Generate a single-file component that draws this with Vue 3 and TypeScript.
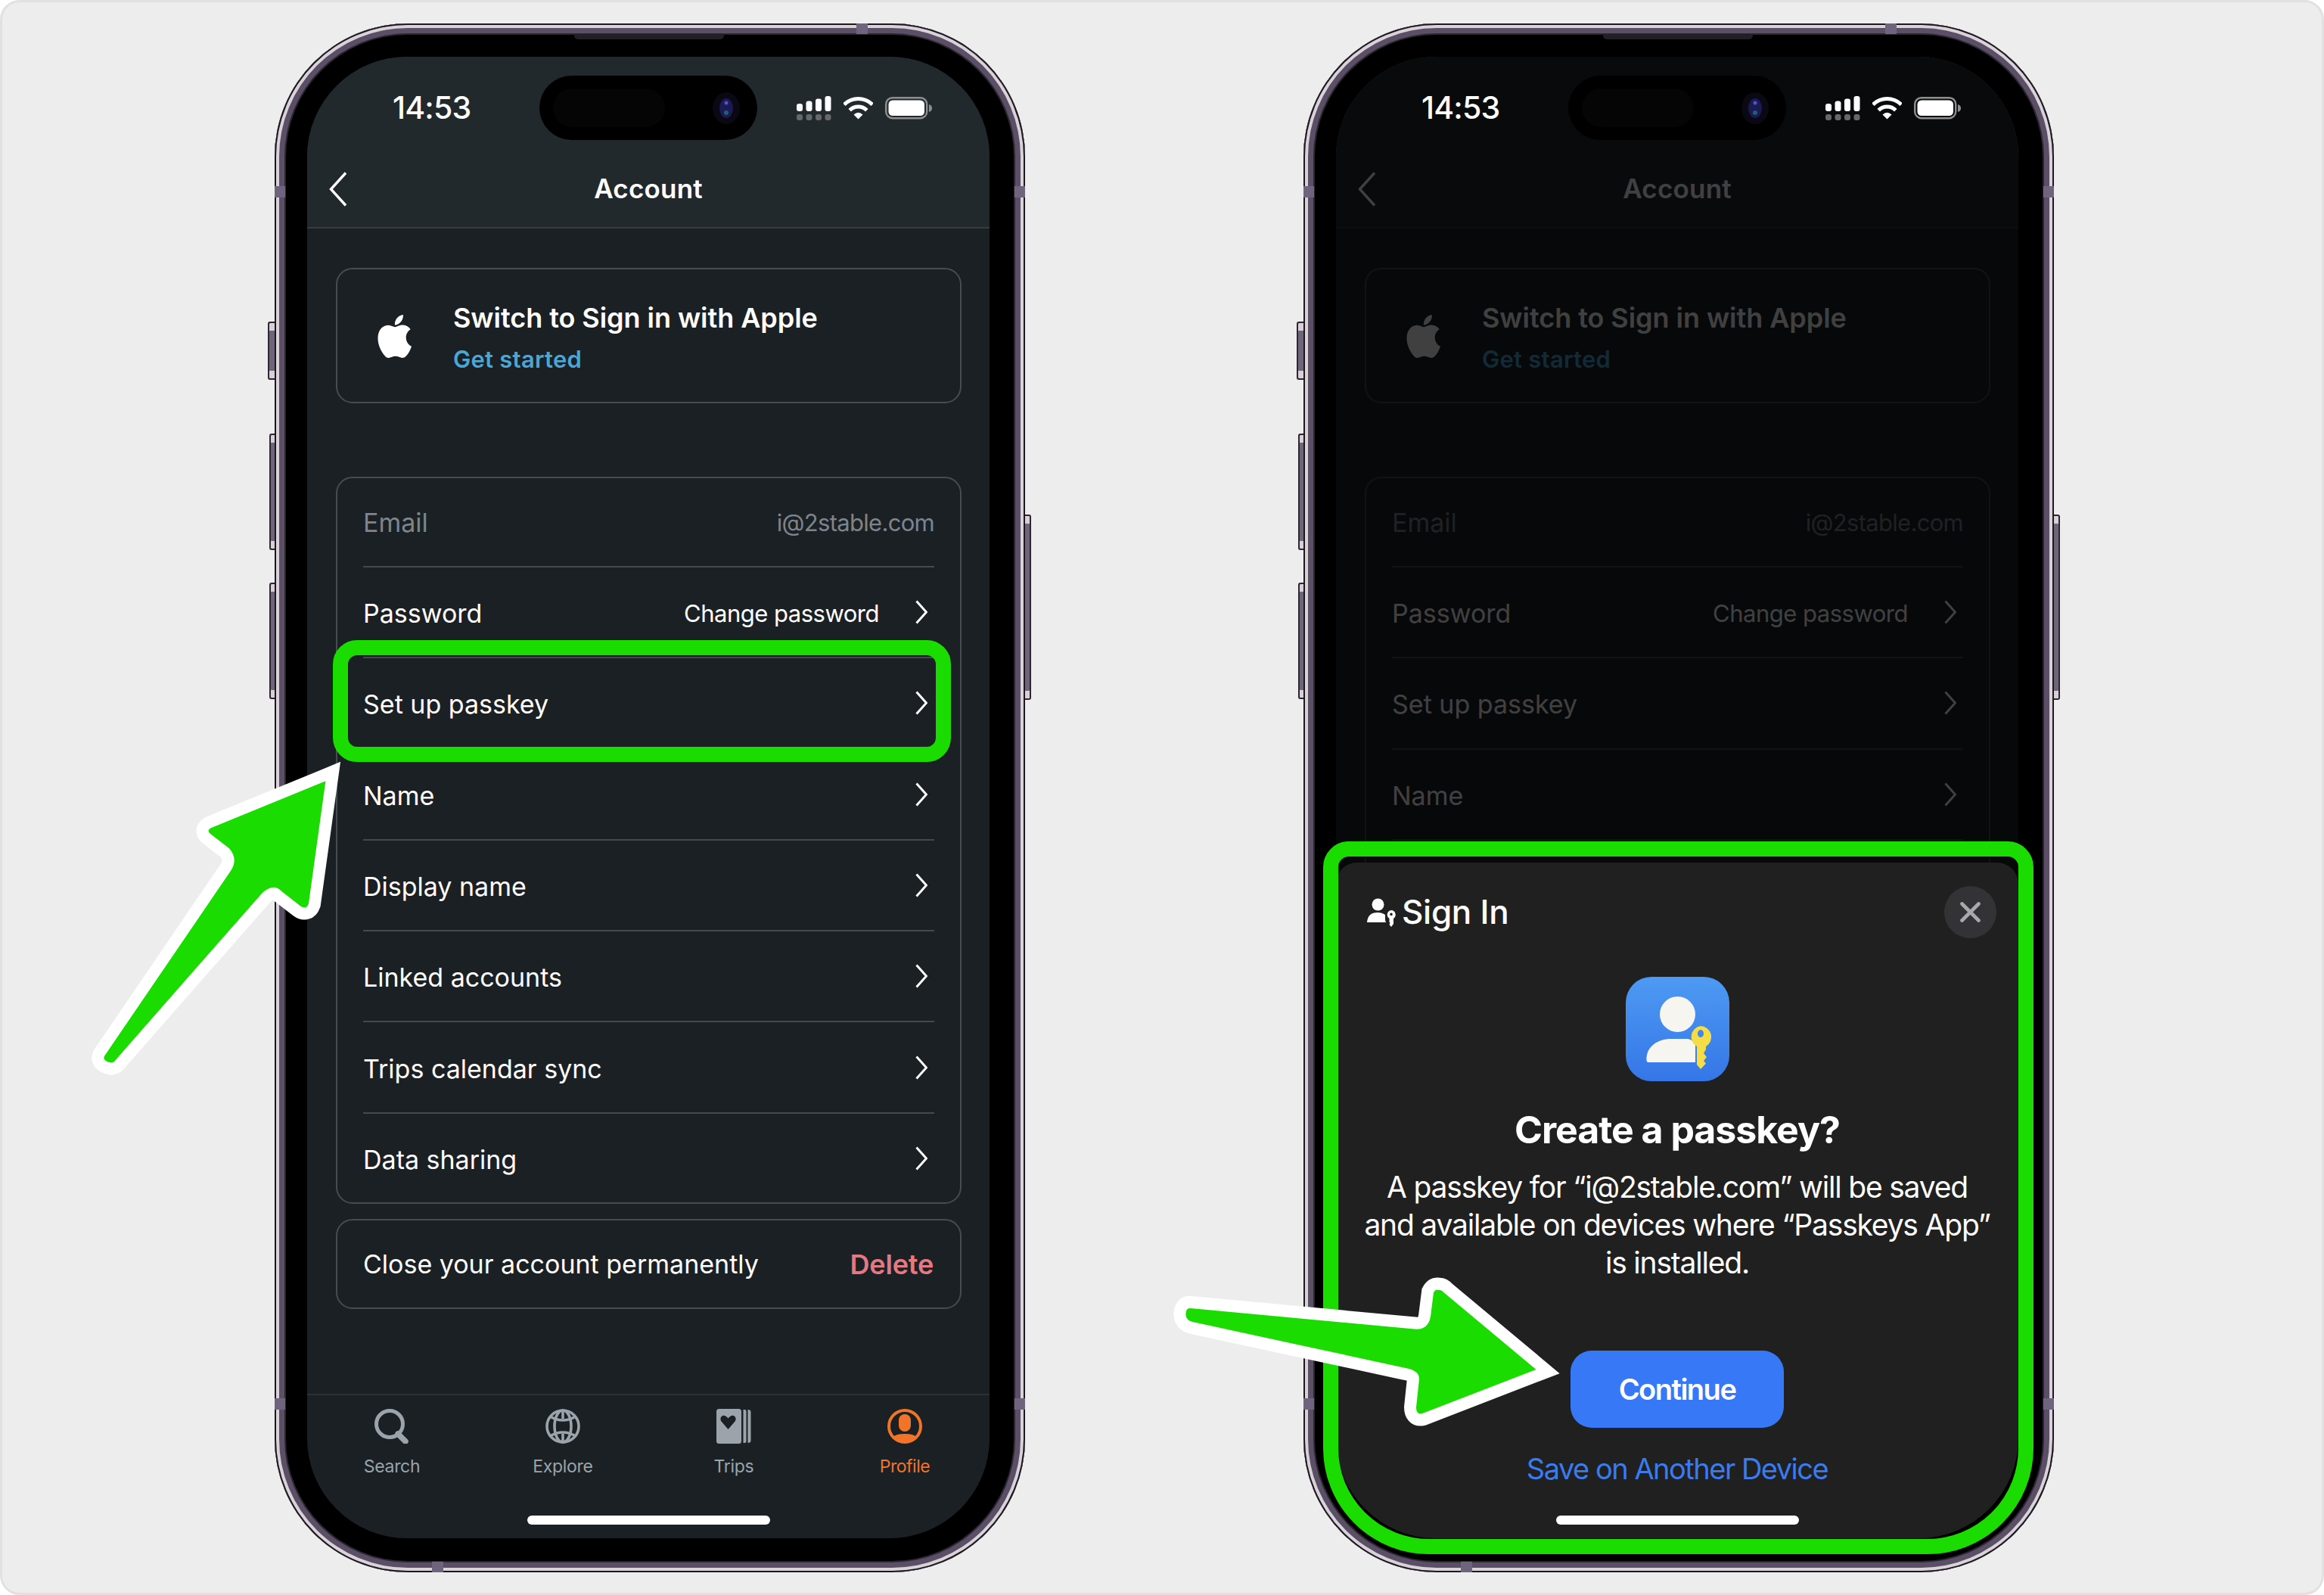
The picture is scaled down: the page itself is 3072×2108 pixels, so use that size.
<script setup lang="ts">
interface Row { label: string; value?: string; muted?: boolean; chevron: boolean }
const rows: Row[] = [
  { label: 'Email', value: 'i@2stable.com', muted: true, chevron: false },
  { label: 'Password', value: 'Change password', chevron: true },
  { label: 'Set up passkey', chevron: true },
  { label: 'Name', chevron: true },
  { label: 'Display name', chevron: true },
  { label: 'Linked accounts', chevron: true },
  { label: 'Trips calendar sync', chevron: true },
  { label: 'Data sharing', chevron: true },
]
const phones = [false, true]
// The sheet covers everything below the "Name" row on the second phone.
const rowsFor = (dim: boolean): Row[] => (dim ? rows.slice(0, 4) : rows)
</script>

<template>
  <div class="page">
    <div v-for="dim in phones" :key="String(dim)" class="phone">
      <i class="band band-top"></i>
      <i class="band band-bottom"></i>
      <i class="band band-l1"></i>
      <i class="band band-r1"></i>
      <i class="band band-l2"></i>
      <i class="band band-r2"></i>
      <i class="btn btn-action"></i>
      <i class="btn btn-up"></i>
      <i class="btn btn-down"></i>
      <i class="btn btn-power"></i>
      <i class="speaker"></i>

      <div class="screen">
        <header class="head">
          <div class="status">
            <div class="time">14:53</div>
            <div class="island">
              <i class="island-pill"></i>
              <svg class="cam" width="36" height="44" viewBox="0 0 36 44">
                <ellipse cx="18" cy="22" rx="18" ry="21" fill="#0a0812" />
                <ellipse cx="18" cy="22" rx="9" ry="13" fill="#1b1a55" />
                <circle cx="18" cy="15" r="2.5" fill="#4d53c8" />
                <circle cx="18" cy="28" r="3" fill="#1f5f6a" />
              </svg>
            </div>
            <div class="sys">
              <svg width="46" height="32" viewBox="0 0 46 32">
                <rect x="0" y="10" width="8" height="10" rx="3" fill="#fff" />
                <rect x="12.5" y="6.5" width="8" height="13.5" rx="3" fill="#fff" />
                <rect x="25" y="3.5" width="8" height="16.5" rx="3" fill="#fff" />
                <rect x="37.5" y="0" width="8" height="20" rx="3" fill="#fff" />
                <rect x="0" y="24" width="8" height="8" rx="3" fill="#666869" />
                <rect x="12.5" y="24" width="8" height="8" rx="3" fill="#666869" />
                <rect x="25" y="24" width="8" height="8" rx="3" fill="#666869" />
                <rect x="37.5" y="24" width="8" height="8" rx="3" fill="#666869" />
              </svg>
              <svg width="39" height="30" viewBox="0 0 39 30" fill="none" stroke="#fff" stroke-width="5">
                <path d="M.8 10.3A26.5 26.5 0 0 1 38.2 10.3" />
                <path d="M8.2 17.7A16 16 0 0 1 30.8 17.7" />
                <path d="M19.5 29.5L13.5 23.5Q19.5 18 25.5 23.5Z" fill="#fff" stroke="none" />
              </svg>
              <svg width="63" height="30" viewBox="0 0 63 30">
                <rect x="1.2" y="1.2" width="54" height="27" rx="8.5" fill="none" stroke="#8e8f90" stroke-width="2.4" />
                <rect x="4.5" y="4.5" width="47.5" height="20.5" rx="5.5" fill="#fff" />
                <path d="M58 10q4 1 4 5t-4 5z" fill="#8e8f90" />
              </svg>
            </div>
          </div>
          <div class="nav">
            <svg class="back" width="24" height="46" viewBox="0 0 24 46" fill="none" stroke="#fff" stroke-width="3.4">
              <path d="M22 1.5L2.5 23L22 44.5" />
            </svg>
            <div class="nav-title">Account</div>
          </div>
        </header>

        <main class="body">
          <section class="card apple">
            <svg class="apple-logo" width="47" height="57" viewBox="3.9 3 16 18" preserveAspectRatio="none">
              <path fill="#fff" d="M17.05 20.28c-.98.95-2.05.8-3.08.35-1.09-.46-2.09-.48-3.24 0-1.44.62-2.2.44-3.06-.35C2.79 15.25 3.51 7.59 9.05 7.31c1.35.07 2.29.74 3.08.8 1.18-.24 2.31-.93 3.57-.84 1.51.12 2.65.72 3.4 1.8-3.12 1.87-2.38 5.98.48 7.13-.57 1.5-1.31 2.99-2.54 4.09zM12.03 7.25c-.15-2.23 1.66-4.07 3.74-4.25.29 2.58-2.34 4.5-3.74 4.25z" />
            </svg>
            <div>
              <div class="apple-title">Switch to Sign in with Apple</div>
              <div class="apple-link">Get started</div>
            </div>
          </section>

          <section class="card group">
            <div v-for="row in rowsFor(dim)" :key="row.label" class="row">
              <span :class="['row-label', { muted: row.muted }]">{{ row.label }}</span>
              <span v-if="row.value" :class="['row-value', { muted: row.muted }]">{{ row.value }}</span>
              <svg v-if="row.chevron" class="chev" width="16" height="32" viewBox="0 0 16 32" fill="none" stroke="#fff" stroke-width="3">
                <path d="M1.5 1.5L14.5 16L1.5 30.5" />
              </svg>
            </div>
          </section>

          <section v-if="!dim" class="card close-card">
            <span class="row-label">Close your account permanently</span>
            <span class="delete">Delete</span>
          </section>
        </main>

        <footer v-if="!dim" class="tabs">
          <div class="tab">
            <svg width="46" height="46" viewBox="0 0 46 46" fill="none" stroke="#9aa4aa">
              <circle cx="20" cy="20" r="17.5" stroke-width="5" />
              <path d="M31 33L41 43" stroke-width="7.5" stroke-linecap="round" />
            </svg>
            <span>Search</span>
          </div>
          <div class="tab">
            <svg width="46" height="46" viewBox="0 0 46 46" fill="none" stroke="#9aa4aa" stroke-width="3.6">
              <circle cx="23" cy="23" r="21" />
              <ellipse cx="23" cy="23" rx="11" ry="21" />
              <path d="M23 2V13M23 33V44M6 10Q23 20 40 10M6 36Q23 26 40 36" />
            </svg>
            <span>Explore</span>
          </div>
          <div class="tab">
            <svg width="46" height="46" viewBox="0 0 46 46">
              <rect x="0" y="0" width="33" height="46" rx="3.5" fill="#9aa4aa" />
              <path d="M35.5 1h2a2 2 0 0 1 2 2v40a2 2 0 0 1-2 2h-2zM41.5 1q4 0 4 3v38q0 3-4 3z" fill="#9aa4aa" />
              <path d="M15.5 27L6 16Q4.5 13 6 11Q8 8 11 9Q14 10 15.5 12.5Q17 10 20 9Q23 8 25 11Q26.5 13 25 16Z" fill="#1b2024" />
            </svg>
            <span>Trips</span>
          </div>
          <div class="tab tab-on">
            <svg width="46" height="46" viewBox="0 0 46 46">
              <circle cx="23" cy="23" r="21" fill="none" stroke="#f27429" stroke-width="4" />
              <rect x="15" y="7" width="16" height="23" rx="8" fill="#f27429" />
              <path d="M7 38Q10 33 23 33Q36 33 39 38Q33 45 23 45Q13 45 7 38Z" fill="#f27429" />
            </svg>
            <span>Profile</span>
          </div>
        </footer>
        <div class="home"></div>

        <div v-if="dim" class="scrim"></div>

        <aside v-if="dim" class="sheet">
          <div class="sheet-top">
            <div class="sheet-brand">
              <svg width="38" height="38" viewBox="0 0 38 38" fill="#fff">
                <circle cx="14.5" cy="8.5" r="8" />
                <path d="M0 32Q1 19 14 19Q20 19 24 22V28Q24 30 25 32Z" />
                <path fill-rule="evenodd" d="M32 16a6 6 0 0 1 3 11v7l-3 4l-2.500-3l1-2l-1-1.500v-4.500a6 6 0 0 1 2.500-11zM32 19.500a1.800 1.800 0 1 0 .01 0z" />
              </svg>
              <span>Sign In</span>
            </div>
            <div class="close">
              <svg width="27" height="27" viewBox="0 0 27 27" stroke="#a9a9ad" stroke-width="4.600" stroke-linecap="round">
                <path d="M2.500 2.500L24.500 24.500M24.500 2.500L2.500 24.500" />
              </svg>
            </div>
          </div>
          <div class="app-icon">
            <svg width="137" height="138" viewBox="0 0 137 138">
              <ellipse cx="68.500" cy="49.500" rx="23.500" ry="23.500" fill="#f6f5ef" />
              <path d="M29 113Q27 112 27.500 106C29 92 42 82 60 82H82Q88 83 92 89V113Z" fill="#f6f5ef" />
              <path fill="#f5dd45" fill-rule="evenodd" d="M99 65a14.500 14.500 0 0 1 7 27v4l-3 5l4 5l-4 5l3 3.500l-7 7.500l-5-6v-24a14.500 14.500 0 0 1 5-27zM99 70a4 5 0 1 0 .01 0z" />
            </svg>
          </div>
          <h2 class="sheet-title">Create a passkey?</h2>
          <p class="sheet-text">A passkey for “i@2stable.com” will be saved<br />and available on devices where “Passkeys App”<br />is installed.</p>
          <div class="continue">Continue</div>
          <div class="another">Save on Another Device</div>
          <div class="home sheet-home"></div>
        </aside>
      </div>
    </div>

    <div class="mark mark-row"></div>
    <div class="mark mark-sheet"></div>
    <svg class="arrows" width="3072" height="2108" viewBox="0 0 3072 2108">
      <path class="arrow" d="M430.400 1032.200L280.800 1093.500Q272 1097 278 1102L303 1121.300Q315 1135 305.400 1150.300L138 1395.800Q135 1402 146.900 1404.500Q151 1404 153.600 1399.900L345.500 1181.400Q361 1166 372.300 1178.100L396.900 1197.200Q405 1203 408 1193.900Z" />
      <path class="arrow" d="M2030.500 1810L1879.700 1868.300Q1872 1870 1872 1860L1875.900 1823.300Q1877 1811 1856.700 1807.700L1577.400 1747.300Q1567 1745 1567.400 1736Q1568 1728 1573.600 1729L1872 1756.700Q1888 1757 1891 1740L1895 1708.300Q1898 1703 1900.400 1705Q1905 1704 1908 1707.700Z" />
    </svg>
  </div>
</template>

<style scoped>
.page {
  position: relative;
  width: 3072px;
  height: 2108px;
  box-sizing: border-box;
  padding: 28px 0 0 360px;
  display: flex;
  gap: 368px;
  align-items: flex-start;
  background: #ededed;
  border: 3px solid #e1e1e1;
  border-radius: 26px;
  font-family: Inter, "Noto Sans", sans-serif;
  color: #fff;
  overflow: hidden;
}
.phone {
  position: relative;
  flex: none;
  width: 992px;
  height: 2047px;
  box-sizing: border-box;
  padding: 44px 47px 45px 43px;
  border-radius: 176px;
  background: #000;
  box-shadow:
    inset 0 0 0 2px #1c1722,
    inset 0 0 0 6px #d9d2d6,
    inset 0 0 0 13px #5a4f66,
    inset 0 0 0 15px #2b2630;
}
.band { position: absolute; background: #6f647d; }
.band-top { left: 769px; top: 0; width: 15px; height: 14px; }
.band-bottom { left: 208px; bottom: 0; width: 15px; height: 14px; }
.band-l1, .band-l2 { left: 0; width: 14px; height: 15px; }
.band-r1, .band-r2 { right: 0; width: 14px; height: 15px; }
.band-l1, .band-r1 { top: 215px; }
.band-l2, .band-r2 { top: 1817px; }
.btn {
  position: absolute;
  box-sizing: border-box;
  background: #6f6578;
  border: 2px solid #2b2630;
  border-right: 0;
  box-shadow: inset 0 10px 0 #d8d0d6, inset 0 -10px 0 #d8d0d6;
}
.btn-action { left: -9px; top: 394px; width: 9px; height: 77px; border-radius: 3px 0 0 3px; }
.btn-up { left: -7px; top: 542px; width: 7px; height: 154px; border-radius: 3px 0 0 3px; }
.btn-down { left: -7px; top: 739px; width: 7px; height: 154px; border-radius: 3px 0 0 3px; }
.btn-power {
  right: -8px;
  top: 649px;
  width: 8px;
  height: 245px;
  border: 2px solid #2b2630;
  border-left: 0;
  border-radius: 0 3px 3px 0;
}
.speaker {
  position: absolute;
  left: 396px;
  top: 14px;
  width: 198px;
  height: 7px;
  background: #221f26;
  border-radius: 0 0 5px 5px;
}
.screen {
  position: relative;
  height: 100%;
  display: flex;
  flex-direction: column;
  background: #1b2024;
  border-radius: 132px;
  overflow: hidden;
}
.head {
  flex: none;
  height: 225px;
  background: #22292c;
  border-bottom: 2px solid #373c3f;
}
.status {
  position: relative;
  z-index: 3;
  display: grid;
  grid-template-columns: 1fr 288px 1fr;
  align-items: center;
  padding: 25px 0 24px;
  height: 85px;
}
.time {
  padding-left: 113px;
  font-size: 41px;
  font-weight: 500;
  letter-spacing: -0.800px;
  line-height: 1;
}
.island {
  height: 85px;
  border-radius: 43px;
  background: #000;
  display: flex;
  align-items: center;
  justify-content: space-between;
  padding: 0 23px 0 18px;
}
.island-pill { width: 148px; height: 51px; border-radius: 26px; background: #050505; }
.sys { display: flex; align-items: center; gap: 16px; padding-left: 52px; }
.nav {
  position: relative;
  height: 82px;
  display: flex;
  align-items: center;
  justify-content: center;
}
.back { position: absolute; left: 29px; top: 18px; }
.nav-title { font-size: 35px; font-weight: 600; letter-spacing: 0.200px; margin-top: -3px; }
.body {
  flex: none;
  padding: 52px 37px 0 38px;
  height: 1540px;
  box-sizing: border-box;
  display: flex;
  flex-direction: column;
}
.card {
  border: 2px solid #474c50;
  border-radius: 22px;
  box-sizing: border-box;
}
.apple {
  height: 179px;
  display: flex;
  align-items: center;
  gap: 54px;
  padding-left: 52px;
  margin-bottom: 97px;
}
.apple-logo { margin-top: 2px; }
.apple-title { font-size: 36px; font-weight: 600; letter-spacing: -0.050px; line-height: 44px; margin-top: 4px; }
.apple-link { font-size: 31px; font-weight: 600; letter-spacing: 0.250px; color: #49a6d6; line-height: 38px; margin-top: 14px; }
.group {
  flex: none;
  height: 961px;
  padding: 0 34px;
  margin-bottom: 20px;
}
.row {
  height: 120.300px;
  padding-top: 3px;
  display: flex;
  align-items: center;
  box-sizing: border-box;
  border-bottom: 2px solid #44494d;
}
.row:first-child { height: 118px; padding-top: 0; }
.row:nth-child(8) { height: 118px; border-bottom: 0; }
.row-label { font-size: 34px; flex: 1; }
.row-label.muted { color: #7c858c; }
.row-value { font-size: 31px; letter-spacing: -0.500px; margin-right: 48px; }
.row-value.muted { color: #7c858c; margin-right: 0; letter-spacing: -0.700px; }
.chev { margin-right: 9px; margin-top: -3px; }
.close-card {
  flex: none;
  height: 119px;
  padding: 0 35px 0 34px;
  display: flex;
  align-items: center;
}
.delete { font-size: 36px; font-weight: 600; color: #e37a83; letter-spacing: -0.200px; }
.tabs {
  flex: none;
  border-top: 2px solid #2b3135;
  display: grid;
  grid-template-columns: repeat(4, 226px);
  padding-top: 18px;
  justify-content: start;
}
.tab {
  display: flex;
  flex-direction: column;
  align-items: center;
  gap: 16px;
  font-size: 23px;
  color: #9aa4aa;
  line-height: 28px;
  letter-spacing: -0.300px;
  transform: translateX(-1px);
}
.tab-on { color: #f27429; letter-spacing: -0.500px; }
.home {
  position: absolute;
  left: 291px;
  top: 1928px;
  width: 321px;
  height: 12px;
  border-radius: 6px;
  background: #fff;
}
.scrim {
  position: absolute;
  inset: 0;
  background: rgba(0, 0, 0, 0.75);
  z-index: 2;
}
.sheet {
  position: absolute;
  z-index: 5;
  left: 0;
  right: 0;
  bottom: 0;
  height: 893px;
  background: #202020;
  border-radius: 28px 28px 0 0;
  display: flex;
  flex-direction: column;
  align-items: center;
}
.sheet-top {
  align-self: stretch;
  display: flex;
  align-items: center;
  justify-content: space-between;
  padding: 31px 29px 0 41px;
}
.sheet-brand {
  display: flex;
  align-items: center;
  gap: 8px;
  font-size: 44px;
  font-weight: 500;
  letter-spacing: -0.300px;
  line-height: 69px;
}
.close {
  width: 69px;
  height: 69px;
  border-radius: 50%;
  background: #333336;
  display: flex;
  align-items: center;
  justify-content: center;
}
.app-icon {
  margin-top: 51px;
  width: 137px;
  height: 138px;
  border-radius: 34px;
  background: linear-gradient(#4e9af3, #3576e7);
}
.app-icon svg { display: block; }
.sheet-title {
  margin: 35px 0 0;
  font-size: 50px;
  font-weight: 700;
  line-height: 58px;
  letter-spacing: -1.050px;
}
.sheet-text {
  margin: 22px 0 0;
  text-align: center;
  font-size: 39px;
  line-height: 50px;
  letter-spacing: -1.200px;
}
.continue {
  margin-top: 91px;
  width: 282px;
  height: 102px;
  border-radius: 28px;
  background: #3778f6;
  display: flex;
  align-items: center;
  justify-content: center;
  font-size: 38px;
  font-weight: 600;
  letter-spacing: -1.500px;
}
.another {
  margin-top: 29px;
  font-size: 38px;
  line-height: 50px;
  letter-spacing: -1.500px;
  color: #3a7bf0;
}
.sheet-home { top: auto; bottom: 18px; }
.mark {
  position: absolute;
  box-sizing: border-box;
  border: 20px solid #1adc00;
  z-index: 8;
}
.mark-row {
  left: 437px;
  top: 843px;
  width: 817px;
  height: 161px;
  border-radius: 32px;
}
.mark-sheet {
  left: 1746px;
  top: 1109px;
  width: 939px;
  height: 942px;
  border-radius: 34px 34px 140px 140px;
}
.arrows {
  position: absolute;
  left: -3px;
  top: -3px;
  z-index: 9;
  pointer-events: none;
}
.arrow {
  fill: #1adc00;
  stroke: #fff;
  stroke-width: 32px;
  stroke-linejoin: miter;
  stroke-miterlimit: 20;
  paint-order: stroke;
}
</style>

<style>
html, body { background: #fff; margin: 0; }
</style>
